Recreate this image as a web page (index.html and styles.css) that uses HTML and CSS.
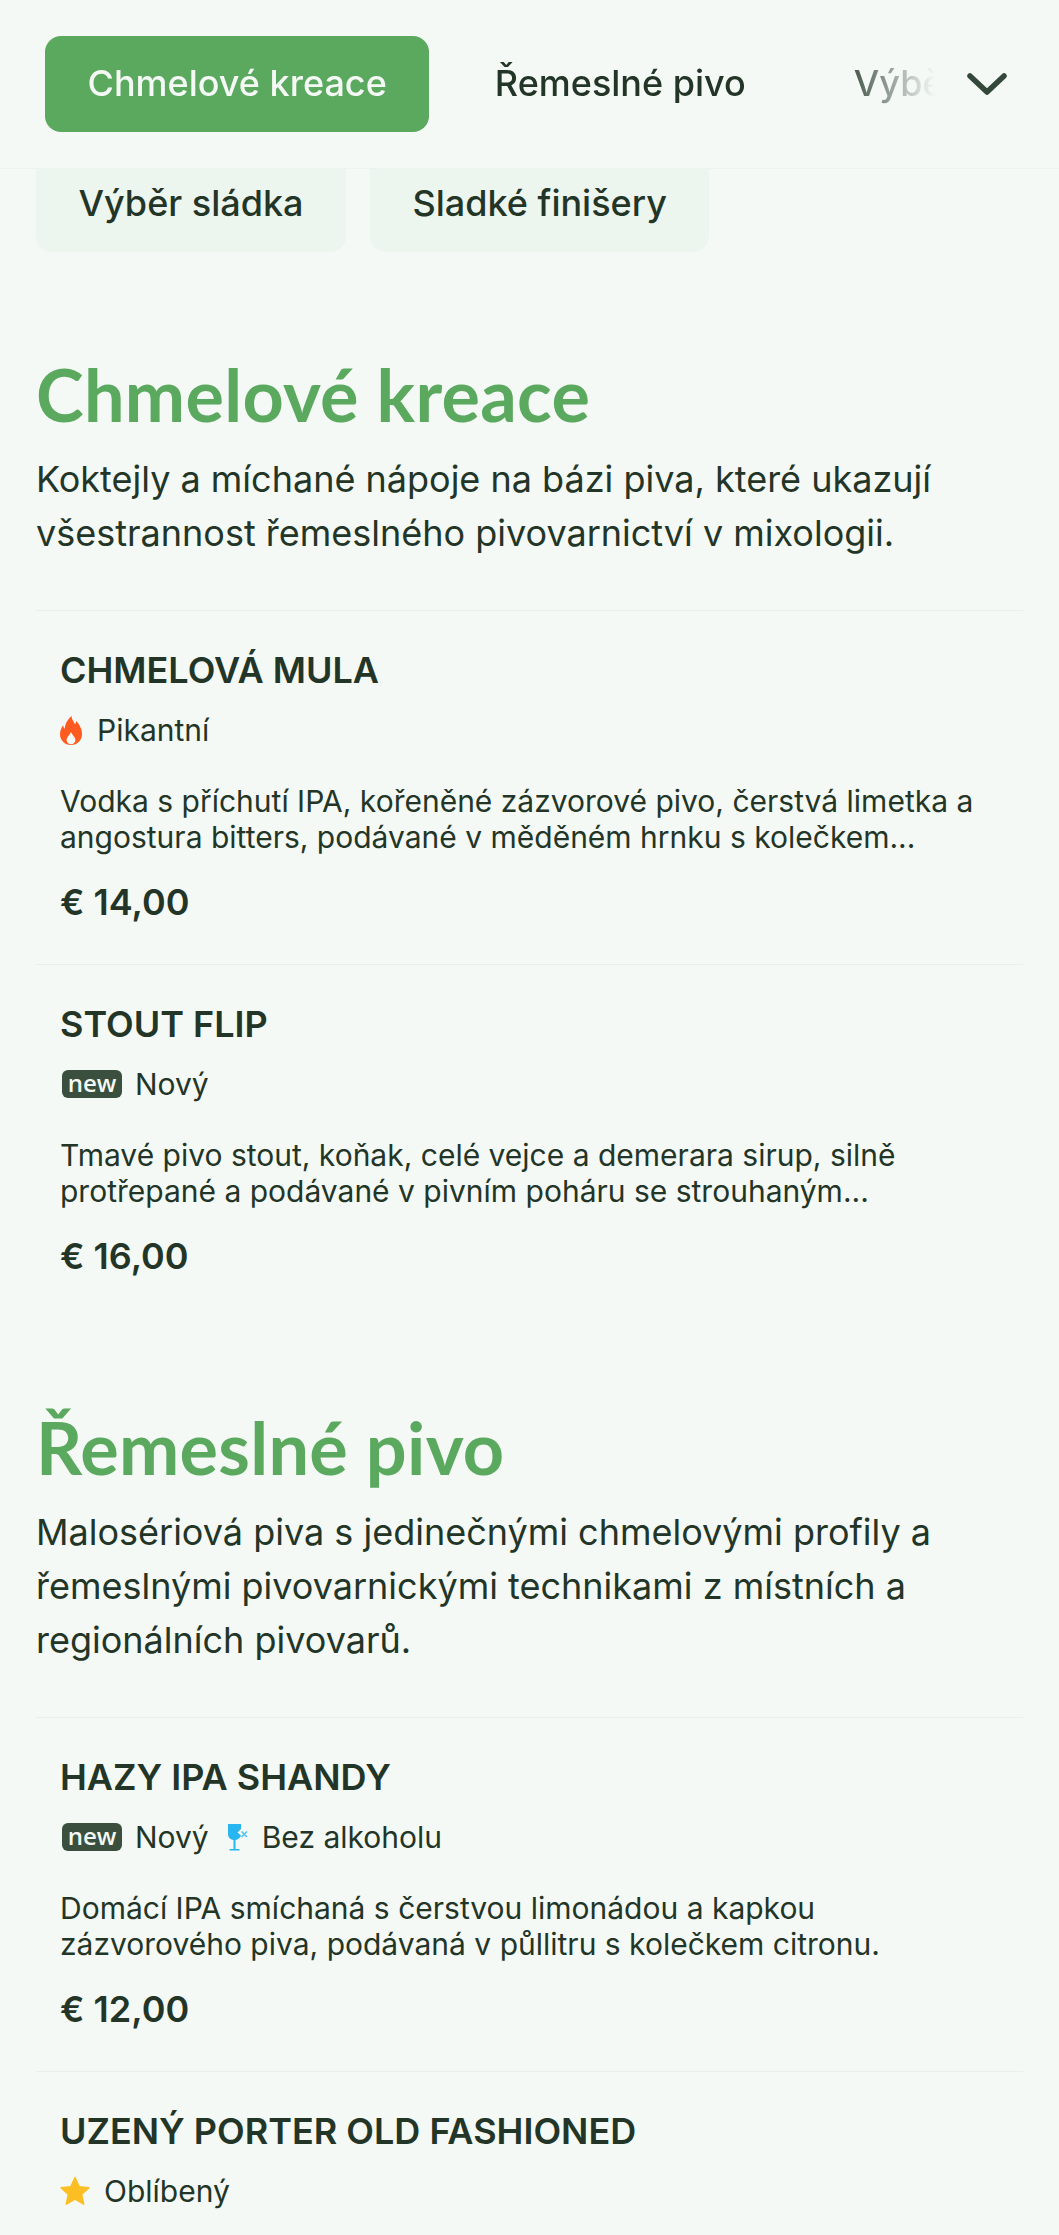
FILE: index.html
```html
<!DOCTYPE html>
<html lang="cs">
<head>
<meta charset="utf-8">
<title>Menu</title>
<link rel="stylesheet" href="styles.css">
</head>
<body>
<header class="topbar">
  <nav class="topnav">
    <a class="topnav-item is-active">Chmelové kreace</a>
    <a class="topnav-item">Řemeslné pivo</a>
    <a class="topnav-item">Výběr sládka</a>
  </nav>
  <svg class="chevron" viewBox="0 0 40 22" width="40" height="22"><path d="M3 3 L20 19 L37 3" fill="none" stroke="#33483a" stroke-width="5.500" stroke-linecap="round" stroke-linejoin="round"/></svg>
</header>
<main class="page">
  <div class="tabs">
    <a class="tab">Výběr sládka</a>
    <a class="tab">Sladké finišery</a>
  </div>

  <section class="section">
    <h2 class="section-title">Chmelové kreace</h2>
    <p class="section-intro">Koktejly a míchané nápoje na bázi piva, které ukazují všestrannost řemeslného pivovarnictví v mixologii.</p>
    <article class="item">
      <h3 class="item-name">CHMELOVÁ MULA</h3>
      <div class="tags">
        <span class="tag"><svg class="icon-fire" viewBox="0 0 22 29" width="22" height="29"><path fill="#ff5a1f" fill-rule="evenodd" d="M11.500 0c.3 3.800 2.100 5.800 3.700 8.200.6-1 .9-2.100.9-3.300 3.400 3.300 5.900 8 5.900 13.100C22 24.300 17.300 29 11 29S0 24.300 0 18c0-3.300 1.300-6.200 3.200-8.800.1 1.500.6 2.800 1.500 3.800C5 8 7.800 3.200 11.500 0zM11 16c-.5 2.300-4.400 4.800-4.400 8.300 0 2.400 2 3.900 4.400 3.900s4.400-1.500 4.400-3.900c0-3.500-3.900-6-4.400-8.300z"/></svg>Pikantní</span>
      </div>
      <p class="item-desc">Vodka s příchutí IPA, kořeněné zázvorové pivo, čerstvá limetka a angostura bitters, podávané v měděném hrnku s kolečkem...</p>
      <div class="item-price">€ 14,00</div>
    </article>
    <article class="item">
      <h3 class="item-name">STOUT FLIP</h3>
      <div class="tags">
        <span class="tag tag-new"><span class="badge-new">new</span>Nový</span>
      </div>
      <p class="item-desc">Tmavé pivo stout, koňak, celé vejce a demerara sirup, silně protřepané a podávané v pivním poháru se strouhaným...</p>
      <div class="item-price">€ 16,00</div>
    </article>
  </section>

  <section class="section">
    <h2 class="section-title">Řemeslné pivo</h2>
    <p class="section-intro">Malosériová piva s jedinečnými chmelovými profily a řemeslnými pivovarnickými technikami z místních a regionálních pivovarů.</p>
    <article class="item">
      <h3 class="item-name">HAZY IPA SHANDY</h3>
      <div class="tags">
        <span class="tag tag-new"><span class="badge-new">new</span>Nový</span>
        <span class="tag tag-glass"><svg class="icon-glass" viewBox="0 0 21 27" width="21" height="27"><path fill="#29b6f0" d="M1 0H14V5L10.500 8.500 14 11.500C13 14 11 15.500 8.500 16V25H12.500V26.500H2.500V25H6.500V16C3 15.500 1 13 1 10Z"/><path fill="none" stroke="#4fc3f0" stroke-width="1.600" d="M14.500 7.500l5.500 5.500M20 7.500l-5.500 5.500"/></svg>Bez alkoholu</span>
      </div>
      <p class="item-desc">Domácí IPA smíchaná s čerstvou limonádou a kapkou zázvorového piva, podávaná v půllitru s kolečkem citronu.</p>
      <div class="item-price">€ 12,00</div>
    </article>
    <article class="item">
      <h3 class="item-name">UZENÝ PORTER OLD FASHIONED</h3>
      <div class="tags">
        <span class="tag"><svg class="icon-star" viewBox="0 0 30 30" width="30" height="30"><path fill="#fbbf24" stroke="#fbbf24" stroke-width="1.500" stroke-linejoin="round" d="M15 1.500l4.200 9.300 9.800 1-7.400 6.600 2.100 9.800L15 23.100l-8.700 5.100 2.100-9.800L1 11.800l9.800-1z"/></svg>Oblíbený</span>
      </div>
    </article>
  </section>
</main>
</body>
</html>
```
FILE: styles.css
```css
* { box-sizing: border-box; }
html, body { margin: 0; padding: 0; }
body {
  height: 2235px;
  overflow: hidden;
  background: #f4f9f5;
  color: #233527;
  font-family: Inter, "Liberation Sans", sans-serif;
}
.topbar {
  position: sticky;
  top: 0;
  z-index: 10;
  display: flex;
  align-items: center;
  height: 169px;
  padding: 0 52px 0 45px;
  background: #f4f9f5;
  border-bottom: 1px solid #edf3ee;
}
.topnav {
  display: flex;
  flex: 1;
  min-width: 0;
  align-items: center;
  gap: 23px;
  overflow: hidden;
  white-space: nowrap;
  -webkit-mask-image: linear-gradient(to right, #000 0, #000 790px, transparent 890px);
  mask-image: linear-gradient(to right, #000 0, #000 790px, transparent 890px);
}
.topnav-item {
  display: block;
  flex: none;
  height: 96px;
  padding: 0 42.500px;
  line-height: 94px;
  font-size: 36px;
  font-weight: 500;
  border-radius: 16px;
}
.topnav-item.is-active {
  background: #5ba85f;
  color: #f4f9f5;
}
.chevron { flex: none; margin-left: 30px; }
.page { padding: 0 36px; margin-top: -15px; }
.tabs { display: flex; gap: 24px; margin-bottom: 13px; }
.tab {
  display: block;
  height: 98px;
  padding: 0 42.500px;
  line-height: 98px;
  font-size: 36px;
  font-weight: 500;
  background: #edf5ef;
  border-radius: 16px;
}
.section { padding-top: 89px; }
.section-title {
  margin: 0;
  font-family: Lato, sans-serif;
  font-size: 72px;
  line-height: 80px;
  letter-spacing: 0.3px;
  font-weight: 700;
  color: #5ba85f;
}
.section-intro {
  margin: 18px 0 0;
  font-size: 36px;
  line-height: 54px;
  max-width: 960px;
}
.item {
  margin-top: 50px;
  padding: 37px 24px 38px;
  border-top: 1px solid #e9f0ea;
}
.item + .item { margin-top: 0; }
.item-name {
  margin: 0;
  font-size: 36px;
  line-height: 44px;
  font-weight: 600;
}
.tags { display: flex; gap: 18px; margin-top: 16px; height: 44px; align-items: center; }
.tag { display: flex; align-items: center; font-size: 30px; line-height: 44px; }
.icon-fire { margin-right: 15px; }
.icon-star { margin-right: 14px; }
.icon-glass { margin-right: 14px; }
.badge-new {
  width: 60px;
  height: 28px;
  margin: 0 13px 0 2px;
  border-radius: 6px;
  background: #3a4f3e;
  color: #f4f9f5;
  font-family: "Open Sans", sans-serif;
  font-size: 24px;
  font-weight: 600;
  line-height: 25px;
  text-align: center;
}
.item-desc {
  margin: 31px 0 0;
  font-size: 30px;
  line-height: 36px;
}
.item-price {
  margin-top: 23px;
  font-size: 36px;
  line-height: 48px;
  font-weight: 600;
}
```
